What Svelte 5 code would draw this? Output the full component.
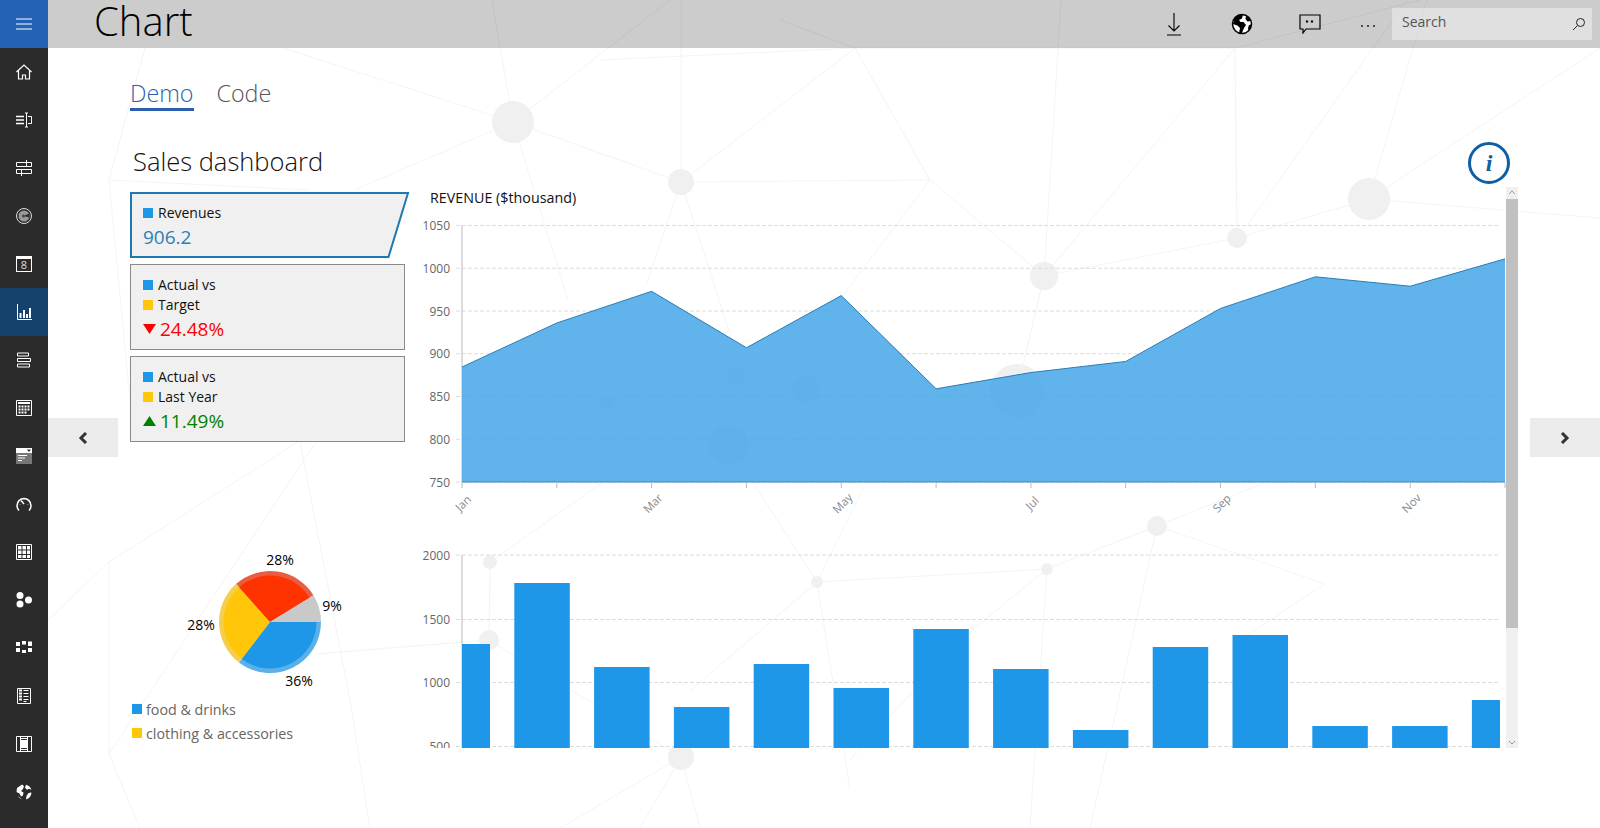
<script lang="ts">
  // network backdrop, page coordinates minus the 48px rail
  const nodes = [
    [513,122,21],[681,182,13],[1369,199,21],[1237,238,10],[1044,276,14],[1017,391,27],
    [736,375,9],[806,389,14],[607,403,7],[729,445,20],[1157,526,10],[490,562,7],
    [489,640,10],[817,582,6],[1047,569,6],[681,757,13]
  ];
  const links = [
    [513,122,681,182],[513,122,670,0],[513,122,492,0],[513,122,354,190],[513,122,568,300],[513,122,283,48],
    [681,0,681,182],[681,182,930,180],[681,182,855,48],[681,182,647,283],[681,182,732,340],
    [855,48,930,180],[855,48,780,20],[855,48,600,60],[1235,48,1237,238],[1235,48,1044,276],[1235,48,855,48],
    [1235,48,1420,0],[1061,0,1044,276],[1237,238,1044,276],[930,180,1044,276],[930,180,730,445],
    [1369,199,1600,218],[1369,199,1600,48],[1369,199,1427,0],[1237,238,1369,199],[1407,0,1246,227],
    [109,562,109,754],[109,562,298,442],[109,754,316,442],[109,562,48,620],[109,754,140,828],
    [109,180,145,48],[109,180,308,190],[109,180,130,400],
    [817,582,1047,569],[1047,569,1157,526],[1157,526,1325,584],[1157,526,1370,440],[817,582,729,445],
    [817,582,864,487],[817,582,691,690],[817,582,850,790],[316,654,489,640],[489,640,681,757],
    [490,562,489,640],[490,562,620,470],[681,757,640,828],[681,757,560,828],[681,757,700,828],
    [1047,569,1030,828],[1157,526,1090,828],[1325,584,1240,640],[1017,391,1044,276],[1017,391,729,445],
    [1047,569,960,640],[960,640,850,760],[300,442,350,700],[350,700,370,828]
  ];

  const months = ['Jan','Feb','Mar','Apr','May','Jun','Jul','Aug','Sep','Oct','Nov','Dec'];
  const revenue = [884.5,936,973,907,968,859,878,891,953,990,979,1011];
  const plotX = 42, stepX = 94.82;
  const revY = (v) => 272 - (v - 750) * 0.855;
  const revX = (i) => plotX + i * stepX;
  const revLine = revenue.map((v, i) => `${revX(i)},${revY(v)}`).join(' ');
  const revArea = `${plotX},272 ${revLine} ${revX(11)},272`;
  const revTicks = [1050,1000,950,900,850,800,750];

  const barTicks = [[2000,25],[1500,89.5],[1000,152.5],[500,216.5]];
  const barTops = [644,583,667,707,664,688,629,669,730,647,635,726,726,700];
  const bars = barTops.map((top, i) => {
    const x = 434.5 + i * 79.8;
    const left = Math.max(x, 42 + 420);
    const right = Math.min(x + 55.5, 1500);
    return { x: left - 420, w: right - left, y: top - 530 };
  });

  // pie: angles in degrees clockwise from +x
  const slices = [
    { from: 0, to: 127.5, fill: '#1e97e8', rim: '#5cb0ea' },
    { from: 127.5, to: 228.4, fill: '#ffc60a', rim: '#f4cf4e' },
    { from: 228.4, to: 328.4, fill: '#ff3300', rim: '#ea5d43' },
    { from: 328.4, to: 360, fill: '#c9c9c9', rim: '#c9c9c9' }
  ];
  function wedge(r, a, b) {
    const cx = 140, cy = 82;
    const p = (d) => [cx + r * Math.cos(d * Math.PI / 180), cy + r * Math.sin(d * Math.PI / 180)];
    const [x1, y1] = p(a), [x2, y2] = p(b);
    return `M${cx} ${cy}L${x1} ${y1}A${r} ${r} 0 ${b - a > 180 ? 1 : 0} 1 ${x2} ${y2}Z`;
  }
</script>

<div class="app">
  <nav class="rail">
    <div class="rail-item menu">
      <svg width="16" height="16" viewBox="0 0 16 16"><path d="M0 3h16M0 8h16M0 13h16" stroke="#fff" fill="none"/></svg>
    </div>
    <div class="rail-item">
      <svg width="16" height="16" viewBox="0 0 16 16" fill="none" stroke="#fff" stroke-width="1.2"><path d="M.5 8 8 1l7.500 7M2.500 7v8h4v-4h3v4h4V7"/></svg>
    </div>
    <div class="rail-item">
      <svg width="16" height="16" viewBox="0 0 16 16" fill="none" stroke="#fff"><path d="M0 4.500h8M0 8h8M0 11.500h8" stroke-width="1.500"/><path d="M10.500 1v14M9 1h3M9 15h3M12 4.500h3.500v7H12"/></svg>
    </div>
    <div class="rail-item">
      <svg width="16" height="16" viewBox="0 0 16 16" fill="none" stroke="#fff"><path d="M.5 2.500h15v4H.5zM.5 9.500h15v4H.5zM10.500 0v6M5.500 9v7"/></svg>
    </div>
    <div class="rail-item">
      <svg width="16" height="16" viewBox="0 0 16 16"><circle cx="8" cy="8" r="7.500" fill="none" stroke="#ddd"/><circle cx="8" cy="8" r="5.500" fill="#999"/><path d="M8 8l5 -2.500v4z" fill="#2b2b2b"/><circle cx="7.500" cy="8" r="1.500" fill="#444"/></svg>
    </div>
    <div class="rail-item">
      <div class="cal"><span>8</span></div>
    </div>
    <div class="rail-item current">
      <svg width="16" height="16" viewBox="0 0 16 16" fill="#fff"><path d="M1.500 0v15.500H16" fill="none" stroke="#fff"/><path d="M3.500 9h2v5h-2zM7 6h2v8H7zM10 10h2v4h-2zM13 4h2v10h-2z"/></svg>
    </div>
    <div class="rail-item">
      <svg width="16" height="16" viewBox="0 0 16 16" fill="none" stroke="#fff"><path d="M1.500 1h11v3h-11zM1.500 6.500h13v3h-13zM1.500 12h12v3h-12z"/></svg>
    </div>
    <div class="rail-item">
      <svg width="16" height="16" viewBox="0 0 16 16" fill="#fff"><path d="M.5.500h15v15H.5z" fill="none" stroke="#fff"/><path d="M2 2h12v2H2zM2.500 5.500h2v2h-2zM5.500 5.500h2v2h-2zM8.500 5.500h2v2h-2zM11.500 5.500h2v2h-2zM2.500 8.500h2v2h-2zM5.500 8.500h2v2h-2zM8.500 8.500h2v2h-2zM11.500 8.500h2v2h-2zM2.500 11.500h2v2h-2zM5.500 11.500h2v2h-2zM8.500 11.500h2v2h-2z"/></svg>
    </div>
    <div class="rail-item">
      <svg width="16" height="16" viewBox="0 0 16 16"><path d="M0 0h16v5H0z" fill="#fff"/><path d="M0 5h16v11H0z" fill="#777"/><path d="M11 1.500h4l-2 2.500z" fill="#333"/><path d="M2 7.500h9M2 10h7M2 12.500h4" stroke="#fff" fill="none"/></svg>
    </div>
    <div class="rail-item">
      <svg width="16" height="16" viewBox="0 0 16 16" fill="none" stroke="#fff"><path d="M3 14.500A7 7 0 1 1 13 14.500" stroke-width="1.500"/><path d="M8 8 5 4.500" stroke-width="1.500"/><path d="M4 8v.5M12 8v.5M8 3v.5" /></svg>
    </div>
    <div class="rail-item">
      <svg width="16" height="16" viewBox="0 0 16 16" fill="#fff"><path d="M.5.500h15v15H.5z" fill="none" stroke="#fff"/><path d="M2 2h3.500v3.500H2zM6.500 2H10v3.500H6.500zM11 2h3v3.500h-3zM2 6.500h3.500V10H2zM6.500 6.500H10V10H6.500zM11 6.500h3V10h-3zM2 11h3.500v3H2zM6.500 11H10v3H6.500zM11 11h3v3h-3z"/></svg>
    </div>
    <div class="rail-item">
      <svg width="16" height="16" viewBox="0 0 16 16" fill="#fff"><circle cx="4" cy="3.500" r="3.500"/><circle cx="4" cy="12" r="3.500"/><circle cx="12.500" cy="8" r="3.500"/></svg>
    </div>
    <div class="rail-item">
      <svg width="16" height="16" viewBox="0 0 16 16" fill="#fff"><path d="M0 2h4v4H0zM6 1h4v3.500H6zM12 1.500h4V6h-4zM0 8h4v4H0zM6 10h4v3H6zM12 8h4v4h-4z"/></svg>
    </div>
    <div class="rail-item">
      <svg width="16" height="16" viewBox="0 0 16 16" fill="none" stroke="#fff"><path d="M1.500.5h13v15h-13z"/><path d="M3 2.500h3M3 5.500h3M3 8.500h3M3 11.500h3" stroke-width="2"/><path d="M7.500 2.500h5M7.500 5.500h5M7.500 8.500h5M7.500 11.500h5M7.500 13.500h3"/></svg>
    </div>
    <div class="rail-item">
      <svg width="16" height="16" viewBox="0 0 16 16" fill="none" stroke="#fff"><path d="M.5.500h15v15H.5zM4.500.5v15M11.500.5v15M5 2.500h6M5 13.500h6"/><path d="M5 4.500h6v7H5z" fill="#fff"/></svg>
    </div>
    <div class="rail-item">
      <svg width="16" height="16" viewBox="0 0 16 16" fill="#fff"><path d="M6 .5 1 4 .5 8l3 1.500 1.500 3 2-1 .5-3L5 7l2-2 1-3zM10 .8l-1 3 2 2 2-1 2.500 1A8 8 0 0 0 10 .8zM15.500 8.500l-3 .5-2 3-.5 3.500a8 8 0 0 0 5.500-7zM2 11.500l3 3 1 1a8 8 0 0 1-4-4z"/></svg>
    </div>
  </nav>

  <main class="main">
    <svg class="backdrop" width="1552" height="828" viewBox="48 0 1552 828">
      {#each links as l}
        <line x1={l[0]} y1={l[1]} x2={l[2]} y2={l[3]} />
      {/each}
      {#each nodes as n}
        <circle cx={n[0]} cy={n[1]} r={n[2]} />
      {/each}
    </svg>

    <header class="topbar">
      <h1>Chart</h1>
      <div class="actions">
        <button class="action" aria-label="Download">
          <svg width="18" height="24" viewBox="0 0 18 24" fill="none" stroke="#000" stroke-width="1.100"><path d="M9 1v18M3.500 13.500 9 19l5.500-5.500M2 23h14"/></svg>
        </button>
        <button class="action" aria-label="Language">
          <svg width="22" height="22" viewBox="0 0 22 22"><circle cx="11" cy="11" r="9.500" fill="#fff" stroke="#000" stroke-width="1.500"/><path d="M9 1.500 3.500 5 2 11l4.500 1.500L9 15l-1 5 2.500 1 2.500-6 2-3-2.500-3H9.500L8 7l3-1.500 1-4zM15 3l-.5 3 2 2.500 4-.5A9.500 9.500 0 0 0 15 3zM20.500 11.500l-2.500 .5-1 3 .5 2.500a9.500 9.500 0 0 0 3-6z" fill="#000"/></svg>
        </button>
        <button class="action" aria-label="Feedback">
          <svg width="22" height="20" viewBox="0 0 22 20" fill="none" stroke="#000" stroke-width="1.200"><path d="M1 1h20v14H7l-3 4v-4H1z"/><path d="M8 6.500v2M13 6.500v2" stroke-width="2.200"/></svg>
        </button>
        <button class="action more" aria-label="More">
          <svg width="16" height="4" viewBox="0 0 16 4" fill="#222"><circle cx="2" cy="2" r="1"/><circle cx="8" cy="2" r="1"/><circle cx="14" cy="2" r="1"/></svg>
        </button>
      </div>
      <div class="search">
        <span>Search</span>
        <svg width="14" height="14" viewBox="0 0 14 14" fill="none" stroke="#222"><circle cx="8.500" cy="5.500" r="4"/><path d="M5.500 8.500 1 13"/></svg>
      </div>
    </header>

    <section class="page">
      <div class="tabs">
        <span class="tab active">Demo</span>
        <span class="tab">Code</span>
      </div>

      <div class="title-row">
        <h2>Sales dashboard</h2>
        <div class="info"><i>i</i></div>
      </div>

      <div class="columns">
        <div class="left">
          <div class="card first">
            <svg class="card-shape" width="281" height="68" viewBox="0 0 281 68"><path d="M2 2h277l-19.500 64H2z" fill="#f0f0f0" stroke="#1f78b0" stroke-width="2"/></svg>
            <div class="row"><b class="sq blue"></b>Revenues</div>
            <div class="value revenue">906.2</div>
          </div>
          <div class="card">
            <div class="row"><b class="sq blue"></b>Actual vs</div>
            <div class="row"><b class="sq amber"></b>Target</div>
            <div class="value down">
              <svg width="13" height="10" viewBox="0 0 13 10"><path d="M0 0h13L6.500 10z" fill="#f00"/></svg>24.48%
            </div>
          </div>
          <div class="card">
            <div class="row"><b class="sq blue"></b>Actual vs</div>
            <div class="row"><b class="sq amber"></b>Last Year</div>
            <div class="value up">
              <svg width="13" height="10" viewBox="0 0 13 10"><path d="M0 10h13L6.500 0z" fill="#008000"/></svg>11.49%
            </div>
          </div>

          <svg class="pie" width="279" height="157" viewBox="0 0 279 157">
            {#each slices as s}
              <path d={wedge(51, s.from, s.to)} fill={s.rim} />
            {/each}
            {#each slices as s}
              <path d={wedge(46.5, s.from, s.to)} fill={s.fill} />
            {/each}
            <text x="150" y="25">28%</text>
            <text x="202" y="71">9%</text>
            <text x="71" y="90">28%</text>
            <text x="169" y="146">36%</text>
          </svg>

          <ul class="legend">
            <li><b class="sq blue"></b>food &amp; drinks</li>
            <li><b class="sq amber"></b>clothing &amp; accessories</li>
          </ul>
        </div>

        <div class="right">
          <div class="plots">
            <div class="chart-title">REVENUE ($thousand)</div>
            <svg class="chart" width="1086" height="320" viewBox="0 0 1086 320">
              {#each revTicks as t}
                <line class="grid" x1="36" x2="1078" y1={revY(t)} y2={revY(t)} />
                <text class="tick" x="36" y={revY(t)}>{t}</text>
              {/each}
              <line class="axis" x1={plotX} x2={plotX} y1={revY(1050)} y2="272" />
              <polygon points={revArea} fill="#47a7e8" fill-opacity="0.86" />
              <polyline points={revLine} fill="none" stroke="#2a7db5" />
              <line x1={plotX} x2={revX(11)} y1="272" y2="272" stroke="#3e86ba" />
              {#each months as m, i}
                <line class="axis" x1={revX(i)} x2={revX(i)} y1="272" y2="278" />
                {#if i % 2 == 0}
                  <text class="month" transform="translate({revX(i) + 1} 293) rotate(-45)">{m}</text>
                {/if}
              {/each}
            </svg>
            <svg class="chart" width="1086" height="218" viewBox="0 0 1086 218">
              {#each barTicks as t}
                <line class="grid" x1="36" x2="1078" y1={t[1]} y2={t[1]} />
                <text class="tick" x="36" y={t[1]}>{t[0]}</text>
              {/each}
              <line class="axis" x1={plotX} x2={plotX} y1="25" y2="218" />
              {#each bars as b}
                <rect x={b.x} y={b.y} width={b.w} height={218 - b.y} fill="#1e97e8" />
              {/each}
            </svg>
          </div>
          <div class="scrollbar">
            <svg width="12" height="12" viewBox="0 0 12 12" fill="none" stroke="#999"><path d="M3 7l3-3 3 3"/></svg>
            <div class="thumb"></div>
            <div class="spacer"></div>
            <svg width="12" height="12" viewBox="0 0 12 12" fill="none" stroke="#999"><path d="M3 5l3 3 3-3"/></svg>
          </div>
        </div>
      </div>
    </section>

    <button class="pager prev" aria-label="Previous">
      <svg width="10" height="12" viewBox="0 0 10 12" fill="none" stroke="#333" stroke-width="3"><path d="M8 1 3 6l5 5"/></svg>
    </button>
    <button class="pager next" aria-label="Next">
      <svg width="10" height="12" viewBox="0 0 10 12" fill="none" stroke="#333" stroke-width="3"><path d="M2 1l5 5-5 5"/></svg>
    </button>
  </main>
</div>

<style>
  :global(body) {
    font-family: "Open Sans", "Liberation Sans", sans-serif;
    background: #fff;
    overflow: hidden;
  }
  .app {
    display: flex;
    height: 828px;
  }
  .rail {
    width: 48px;
    flex: none;
    background: #2b2b2b;
    display: flex;
    flex-direction: column;
  }
  .rail-item {
    height: 48px;
    display: flex;
    align-items: center;
    justify-content: center;
  }
  .menu {
    background: #2363b5;
  }
  .current {
    background: #14426d;
  }
  .cal {
    width: 16px;
    height: 16px;
    box-sizing: border-box;
    border: 1px solid #fff;
    border-top-width: 3px;
    color: #ddd;
    font-size: 11px;
    line-height: 12px;
    text-align: center;
  }
  .main {
    flex: 1;
    position: relative;
    overflow: hidden;
  }
  .backdrop {
    position: absolute;
    left: 0;
    top: 0;
  }
  .backdrop line {
    stroke: #f4f4f4;
    stroke-width: 1;
  }
  .backdrop circle {
    fill: #f0f0f0;
  }
  .topbar {
    position: relative;
    height: 48px;
    background: rgba(0, 0, 0, 0.2);
    display: flex;
    padding: 0 8px 0 46px;
    align-items: center;
  }
  h1 {
    margin: 0;
    flex: 1;
    align-self: flex-start;
    font-size: 40px;
    font-weight: 300;
    line-height: 42px;
    color: #000;
  }
  .actions {
    display: flex;
  }
  .action {
    width: 68px;
    height: 48px;
    padding: 0;
    border: 0;
    background: none;
    display: flex;
    align-items: center;
    justify-content: center;
  }
  .more {
    width: 48px;
    padding-top: 4px;
  }
  .search {
    width: 200px;
    height: 32px;
    box-sizing: border-box;
    padding: 0 6px 0 10px;
    background: rgba(255, 255, 255, 0.4);
    display: flex;
    align-items: center;
    justify-content: space-between;
    font-size: 14px;
    color: #555;
  }
  .search span {
    margin-top: -5px;
  }
  .page {
    position: relative;
    padding: 0 82px;
  }
  .tabs {
    display: flex;
    gap: 23px;
    padding-top: 28px;
  }
  .tab {
    font-size: 23.3px;
    font-weight: 300;
    line-height: 34px;
    height: 32px;
    padding-bottom: 3px;
    color: #555;
  }
  .active {
    color: #2a5fb0;
    border-bottom: 3px solid #2a5fb0;
    padding-bottom: 0;
  }
  .title-row {
    margin: 31px 0 3px;
    padding: 0 8px 0 3px;
    display: flex;
    align-items: center;
    justify-content: space-between;
  }
  h2 {
    margin: 0;
    padding-bottom: 4px;
    font-size: 25.5px;
    font-weight: 300;
    color: #111;
  }
  .info {
    width: 42px;
    height: 42px;
    box-sizing: border-box;
    border: 3px solid #0f5fa5;
    border-radius: 50%;
    display: flex;
    align-items: center;
    justify-content: center;
    color: #0f5fa5;
    font: italic bold 24px "Liberation Serif", serif;
  }
  .columns {
    display: flex;
  }
  .left {
    width: 290px;
    flex: none;
    padding-top: 5px;
  }
  .card {
    width: 275px;
    height: 86px;
    box-sizing: border-box;
    margin-bottom: 6px;
    padding: 10px 0 0 12px;
    border: 1px solid #8a8a8a;
    background: #f0f0f0;
  }
  .card.first {
    position: relative;
    width: 279px;
    height: 66px;
    border: 0;
    background: none;
    padding: 11px 0 0 13px;
  }
  .card-shape {
    position: absolute;
    left: -1px;
    top: -1px;
  }
  .row {
    position: relative;
    height: 20px;
    box-sizing: border-box;
    padding-bottom: 2px;
    display: flex;
    align-items: center;
    gap: 5px;
    font-size: 14px;
    color: #111;
  }
  .row .sq {
    margin-top: 1px;
  }
  .sq {
    width: 10px;
    height: 10px;
    flex: none;
  }
  .blue {
    background: #1e97e8;
  }
  .amber {
    background: #ffc60a;
  }
  .value {
    position: relative;
    height: 28px;
    display: flex;
    align-items: center;
    gap: 4px;
    font-size: 19px;
  }
  .revenue {
    color: #2b7fb5;
  }
  .down {
    color: #f00;
  }
  .up {
    color: #008000;
  }
  .pie {
    display: block;
    margin-top: 98px;
  }
  .pie text {
    font-size: 14px;
    text-anchor: middle;
    fill: #000;
  }
  .legend {
    margin: 0;
    padding: 0 0 0 2px;
    list-style: none;
  }
  .legend li {
    height: 24px;
    display: flex;
    align-items: center;
    gap: 4px;
    font-size: 14.3px;
    color: #666;
  }
  .right {
    display: flex;
    height: 561px;
    margin-left: 0;
  }
  .plots {
    width: 1086px;
    overflow: hidden;
  }
  .chart-title {
    height: 23px;
    padding-left: 10px;
    font-size: 14.3px;
    line-height: 22px;
    color: #111;
  }
  .chart {
    display: block;
  }
  .grid {
    stroke: #dcdcdc;
    stroke-dasharray: 4 2;
  }
  .axis {
    stroke: #bbb;
  }
  .tick {
    font-size: 12px;
    fill: #666;
    text-anchor: end;
    dominant-baseline: central;
    transform: translateX(-6px);
  }
  .month {
    font-size: 11.5px;
    fill: #888;
    text-anchor: middle;
    dominant-baseline: central;
  }
  .scrollbar {
    width: 12px;
    flex: none;
    display: flex;
    flex-direction: column;
    background: #f0f0f0;
  }
  .thumb {
    height: 429px;
    background: #c0c0c0;
  }
  .spacer {
    flex: 1;
  }
  .pager {
    position: absolute;
    top: 418px;
    width: 70px;
    height: 39px;
    padding: 0;
    border: 0;
    background: #ebebeb;
    display: flex;
    align-items: center;
    justify-content: center;
  }
  .prev {
    left: 0;
  }
  .next {
    right: 0;
  }
</style>
